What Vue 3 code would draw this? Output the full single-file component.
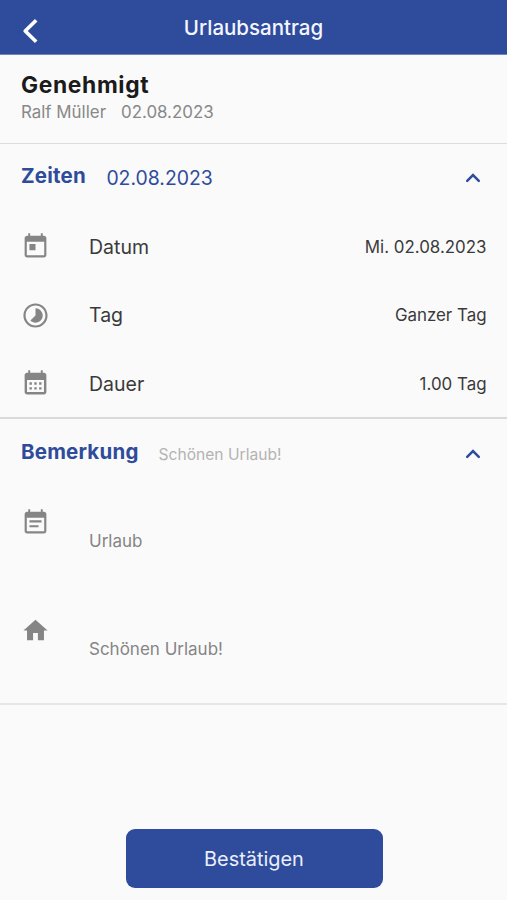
<template>
  <div class="page">
    <header class="topbar">
      <button class="btn-back" aria-label="Zurück">
        <svg width="18" height="28" viewBox="0 0 18 28">
          <path d="M15.2 3.2 4.2 14 15.2 24.8" />
        </svg>
      </button>
      <h1>Urlaubsantrag</h1>
    </header>

    <section class="summary">
      <h2>Genehmigt</h2>
      <div class="meta">
        <span class="person">Ralf Müller</span>
        <span class="date">02.08.2023</span>
      </div>
    </section>

    <section class="times">
      <div class="section-head" @click="timesOpen = !timesOpen">
        <h3 class="head-times">Zeiten</h3>
        <span class="head-date">02.08.2023</span>
        <svg class="chevron" :class="{ closed: !timesOpen }" width="16" height="10" viewBox="0 0 16 10">
          <path d="M2.2 7.8 8 2l5.8 5.8" />
        </svg>
      </div>

      <template v-if="timesOpen">
        <div v-for="r in rows" :key="r.label" class="row">
          <svg class="icon" viewBox="0 0 24 24"><path :d="r.icon" /></svg>
          <span class="label">{{ r.label }}</span>
          <span class="value">{{ r.value }}</span>
        </div>
      </template>
    </section>

    <section class="remark">
      <div class="section-head" @click="remarkOpen = !remarkOpen">
        <h3 class="head-remark">Bemerkung</h3>
        <span class="head-note">Schönen Urlaub!</span>
        <svg class="chevron" :class="{ closed: !remarkOpen }" width="16" height="10" viewBox="0 0 16 10">
          <path d="M2.2 7.8 8 2l5.8 5.8" />
        </svg>
      </div>

      <template v-if="remarkOpen">
        <div v-for="n in notes" :key="n.text" class="note">
          <svg class="icon" viewBox="0 0 24 24"><path :d="n.icon" /></svg>
          <span class="note-text">{{ n.text }}</span>
        </div>
      </template>
    </section>

    <footer class="actions">
      <button class="btn-confirm">Bestätigen</button>
    </footer>
  </div>
</template>

<script setup>
import { ref } from 'vue'

const timesOpen = ref(true)
const remarkOpen = ref(true)

const rows = [
  {
    label: 'Datum',
    value: 'Mi. 02.08.2023',
    icon: 'M19 3h-1V1h-1.6v2H7.6V1H6v2H5c-1.11 0-1.99.9-1.99 2L3 19c0 1.1.89 2 2 2h14c1.1 0 2-.9 2-2V5c0-1.1-.9-2-2-2zm.2 16.2H4.8V8h14.4v11.2zM7 10h5v5H7z'
  },
  {
    label: 'Tag',
    value: 'Ganzer Tag',
    icon: 'M16.24 7.76C15.07 6.59 13.54 6 12 6v6l-4.24 4.24c2.34 2.34 6.14 2.34 8.49 0 2.34-2.34 2.34-6.14-.01-8.48zM12 2C6.48 2 2 6.48 2 12s4.48 10 10 10 10-4.48 10-10S17.52 2 12 2zm0 18.2c-4.53 0-8.2-3.67-8.2-8.2s3.67-8.2 8.2-8.2 8.2 3.67 8.2 8.2-3.67 8.2-8.2 8.2z'
  },
  {
    label: 'Dauer',
    value: '1.00 Tag',
    icon: 'M19 3h-1V1h-1.6v2H7.6V1H6v2H5c-1.1 0-2 .9-2 2v14c0 1.1.9 2 2 2h14c1.1 0 2-.9 2-2V5c0-1.1-.9-2-2-2zm0 16H5V9h14v10zM7 11h2v2H7zm4 0h2v2h-2zm4 0h2v2h-2zM7 15h2v2H7zm4 0h2v2h-2zm4 0h2v2h-2z'
  }
]

const notes = [
  {
    text: 'Urlaub',
    icon: 'M17 10.2H7V12h10v-1.8zM19 3h-1V1h-1.6v2H7.6V1H6v2H5c-1.11 0-1.99.9-1.99 2L3 19c0 1.1.89 2 2 2h14c1.1 0 2-.9 2-2V5c0-1.1-.9-2-2-2zm.2 16.2H4.8V8h14.4v11.2zM14.5 14.2H7V16h7.5v-1.8z'
  },
  {
    text: 'Schönen Urlaub!',
    icon: 'M10 20v-6h4v6h5v-8h3L12 3 2 12h3v8z'
  }
]
</script>

<style>
body {
  background: #fafafa;
}
</style>

<style scoped>
.page {
  display: flex;
  flex-direction: column;
  box-sizing: border-box;
  height: 900px;
  background: #fafafa;
  color: #3a3a3a;
  font-family: Inter, "Liberation Sans", sans-serif;
  overflow: hidden;
}

h1,
h2,
h3 {
  margin: 0;
}

button {
  border: 0;
  padding: 0;
  font-family: inherit;
}

.topbar {
  display: grid;
  grid-template-columns: 60px 1fr 60px;
  height: 54px;
  background: #2f4b9b;
  border-bottom: 1px solid #7184b9;
  color: #f3f6ff;
}

.topbar h1 {
  font-size: 20.5px;
  font-weight: 500;
  line-height: 56px;
  text-align: center;
}

.btn-back {
  display: flex;
  padding: 17px 0 0 21px;
  background: none;
}

.btn-back path {
  fill: none;
  stroke: #fff;
  stroke-width: 3.7;
  stroke-linejoin: round;
}

.summary {
  height: 89px;
  box-sizing: border-box;
  padding: 15px 21px 0;
  border-bottom: 1px solid #dcdcdc;
}

.summary h2 {
  color: #1b1b1b;
  font-size: 22.8px;
  font-weight: 700;
  line-height: 30px;
  letter-spacing: 0.65px;
}

.meta {
  display: flex;
  gap: 15px;
  color: #888;
  font-size: 16.9px;
  line-height: 24px;
}

.section-head {
  display: flex;
  align-items: center;
  height: 68.5px;
  padding: 0 26px 0 21px;
  color: #2f4b9b;
}

.section-head h3 {
  padding-bottom: 5px;
  font-size: 20.5px;
  font-weight: 700;
  letter-spacing: 0.2px;
}

.head-date {
  margin-left: 20.5px;
  font-size: 19.4px;
}

.head-note {
  margin-left: 20px;
  color: #b3b3b3;
  font-size: 15.6px;
}

.chevron {
  margin-left: auto;
}

.chevron.closed {
  transform: rotate(180deg);
}

.chevron path {
  fill: none;
  stroke: #2f4b9b;
  stroke-width: 2.5;
  stroke-linecap: round;
}

.times {
  height: 275px;
  box-sizing: border-box;
  border-bottom: 2px solid #dadada;
}

.row {
  display: flex;
  align-items: center;
  height: 68.5px;
  padding: 0 20.5px;
}

.icon {
  flex: none;
  width: 29px;
  height: 29px;
  fill: #858585;
}

.label {
  margin-left: 39.5px;
  font-size: 19.5px;
}

.value {
  margin-left: auto;
  font-size: 16.9px;
}

.remark {
  height: 286px;
  box-sizing: border-box;
  border-bottom: 2px solid #e6e6e6;
}

.remark .section-head {
  height: 70px;
}

.note {
  display: flex;
  height: 89px;
  padding: 19px 20px 0 20.5px;
}

.note-text {
  margin: 21px 0 0 39.5px;
  color: #858585;
  font-size: 17px;
  line-height: 24px;
}

.actions {
  display: flex;
  justify-content: center;
  padding: 124px 0 0 1px;
}

.btn-confirm {
  width: 257px;
  height: 59px;
  border-radius: 9px;
  background: #2f4b9b;
  color: #e9effc;
  font-size: 19.9px;
}
</style>
